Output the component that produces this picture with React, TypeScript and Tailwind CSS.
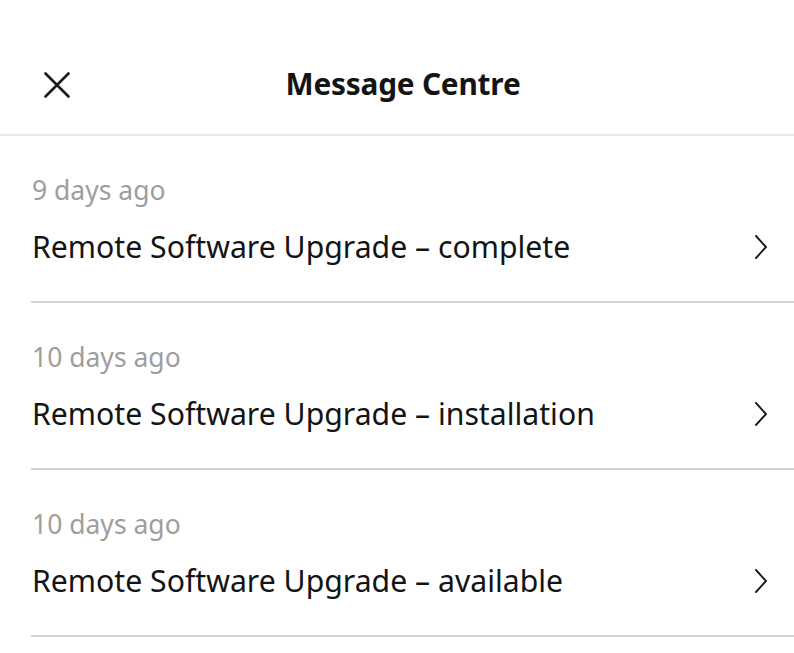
import React from "react";

const messages = [
  { age: "9 days ago", title: "Remote Software Upgrade – complete" },
  { age: "10 days ago", title: "Remote Software Upgrade – installation" },
  { age: "10 days ago", title: "Remote Software Upgrade – available" },
];

const CloseIcon = () => (
  <svg width="26" height="26" viewBox="0 0 26 26" fill="none">
    <path d="M1.5 1.5L24.5 24.5M24.5 1.5L1.5 24.5" stroke="#1a1a1a" strokeWidth="2.6" strokeLinecap="round" />
  </svg>
);

const Chevron = () => (
  <svg width="14" height="26" viewBox="0 0 14 26" fill="none">
    <path d="M2 2L12 13L2 24" stroke="#1a1a1a" strokeWidth="1.9" strokeLinecap="round" strokeLinejoin="round" />
  </svg>
);

export default function App() {
  return (
    <div className="min-h-screen w-[794px] bg-white font-['Noto_Sans',sans-serif] text-[#141414]">
      <header className="relative flex h-[136px] items-center justify-center border-b-2 border-[#e8e8e8] pl-[12px] pt-[34px]">
        <button className="absolute left-[44px] top-[72px]">
          <CloseIcon />
        </button>
        <h1 className="text-[29.8px] font-bold leading-[36px] tracking-[-0.2px]">Message Centre</h1>
      </header>
      <ul className="pl-[31px]">
        {messages.map((m, i) => (
          <li key={i} className="border-b-2 border-[#d2d2d2] pt-[39px] pb-[37px]">
            <div className="pl-px text-[26.5px] leading-[30px] text-[#9e9e9e]">{m.age}</div>
            <div className="mt-[25px] flex items-center justify-between pl-px pr-[26px]">
              <span className="text-[30.2px] leading-[34px]">{m.title}</span>
              <Chevron />
            </div>
          </li>
        ))}
      </ul>
    </div>
  );
}
